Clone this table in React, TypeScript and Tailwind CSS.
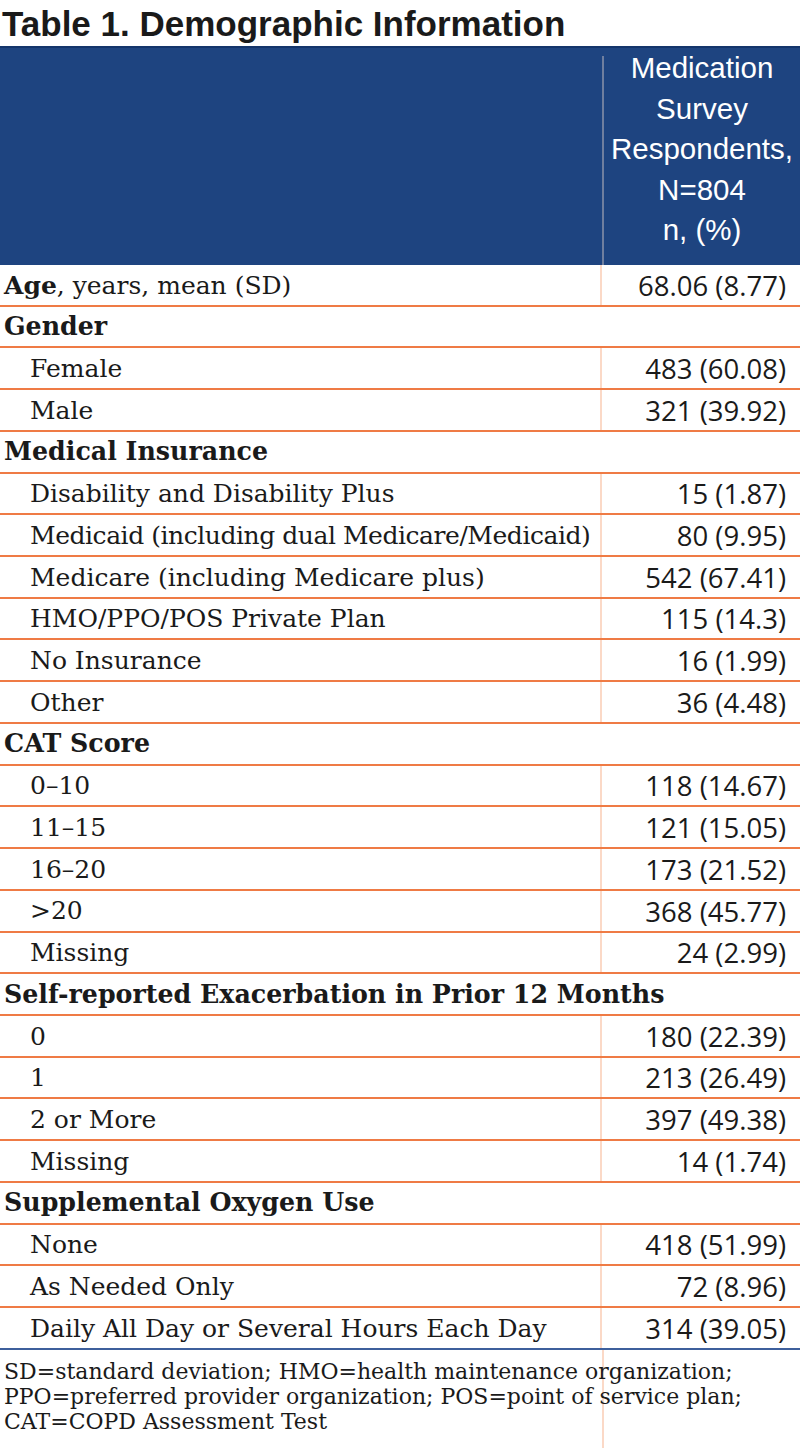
import React from 'react';

type Row = { label: string; value?: string; kind: 'head' | 'item' | 'age'; tight?: boolean };

const rows: Row[] = [
    { label: 'Age', value: '68.06 (8.77)', kind: 'age' },
    { label: 'Gender', kind: 'head' },
    { label: 'Female', value: '483 (60.08)', kind: 'item' },
    { label: 'Male', value: '321 (39.92)', kind: 'item' },
    { label: 'Medical Insurance', kind: 'head' },
    { label: 'Disability and Disability Plus', value: '15 (1.87)', kind: 'item' },
    { label: 'Medicaid (including dual Medicare/Medicaid)', value: '80 (9.95)', kind: 'item', tight: true },
    { label: 'Medicare (including Medicare plus)', value: '542 (67.41)', kind: 'item' },
    { label: 'HMO/PPO/POS Private Plan', value: '115 (14.3)', kind: 'item' },
    { label: 'No Insurance', value: '16 (1.99)', kind: 'item' },
    { label: 'Other', value: '36 (4.48)', kind: 'item' },
    { label: 'CAT Score', kind: 'head' },
    { label: '0–10', value: '118 (14.67)', kind: 'item' },
    { label: '11–15', value: '121 (15.05)', kind: 'item' },
    { label: '16–20', value: '173 (21.52)', kind: 'item' },
    { label: '>20', value: '368 (45.77)', kind: 'item' },
    { label: 'Missing', value: '24 (2.99)', kind: 'item' },
    { label: 'Self-reported Exacerbation in Prior 12 Months', kind: 'head' },
    { label: '0', value: '180 (22.39)', kind: 'item' },
    { label: '1', value: '213 (26.49)', kind: 'item' },
    { label: '2 or More', value: '397 (49.38)', kind: 'item' },
    { label: 'Missing', value: '14 (1.74)', kind: 'item' },
    { label: 'Supplemental Oxygen Use', kind: 'head' },
    { label: 'None', value: '418 (51.99)', kind: 'item' },
    { label: 'As Needed Only', value: '72 (8.96)', kind: 'item' },
    { label: 'Daily All Day or Several Hours Each Day', value: '314 (39.05)', kind: 'item' },
];

const serif = "font-['DejaVu_Serif',serif]";

const TableRow = ({ row, last }: { row: Row; last: boolean }) => {
    const border = last ? 'border-[#3d5f9c]' : 'border-[#ef7b45]';
    if (row.kind === 'head') {
        return (
            <div className={`h-[41.72px] flex items-center border-b-2 ${border} pl-[4px] pt-[1px] text-[25.3px] font-bold text-[#1a1a1a] whitespace-nowrap ${serif}`}>
                {row.label}
            </div>
        );
    }
    return (
        <div className={`h-[41.72px] flex border-b-2 ${border}`}>
            <div className={`w-[602px] flex items-center pt-[1px] border-r-2 border-[#fbd9c7] text-[25px] text-[#1a1a1a] whitespace-nowrap ${serif} ${row.kind === 'item' ? 'pl-[30px]' : 'pl-[4px]'} ${row.tight ? 'tracking-[-0.45px]' : ''}`}>
                {row.kind === 'age' ? (
                    <span><span className="font-bold">Age</span>, years, mean (SD)</span>
                ) : (
                    row.label
                )}
            </div>
            <div className="flex-1 flex items-center justify-end pt-[1px] pr-[14px] text-[27.5px] text-[#1a1a1a] font-['Open_Sans',sans-serif]">
                {row.value}
            </div>
        </div>
    );
};

export default function App() {
    return (
        <div className="w-[800px] h-[1449px] bg-white overflow-hidden">
            <h1 className="h-[46px] pl-[2px] flex items-center text-[35px] font-bold leading-none text-[#1a1a1a] font-['Liberation_Sans',sans-serif]">
                Table 1. Demographic Information
            </h1>
            <div className="h-[219px] flex bg-[#1e4480] border-t-2 border-[#14356b]">
                <div className="w-[602px]" />
                <div className="w-[2px] mt-[8px] bg-[#6f7f9f]" />
                <div className="flex-1 text-center text-white text-[29.5px] leading-[40.5px] font-['Liberation_Sans',sans-serif]">
                    Medication<br />Survey<br />Respondents,<br />N=804<br />n, (%)
                </div>
            </div>
            {rows.map((row, i) => (
                <TableRow key={i} row={row} last={i === rows.length - 1} />
            ))}
            <div className="relative pt-[9px] pl-[4px] text-[22px] leading-[25px] text-[#1a1a1a] font-['DejaVu_Serif',serif] h-[98px]">
                <div className="absolute left-[602px] top-0 bottom-0 w-[2px] bg-[#fbd9c7]" />
                <p className="relative">SD=standard deviation; HMO=health maintenance organization;</p>
                <p className="relative">PPO=preferred provider organization; POS=point of service plan;</p>
                <p className="relative">CAT=COPD Assessment Test</p>
            </div>
        </div>
    );
}
